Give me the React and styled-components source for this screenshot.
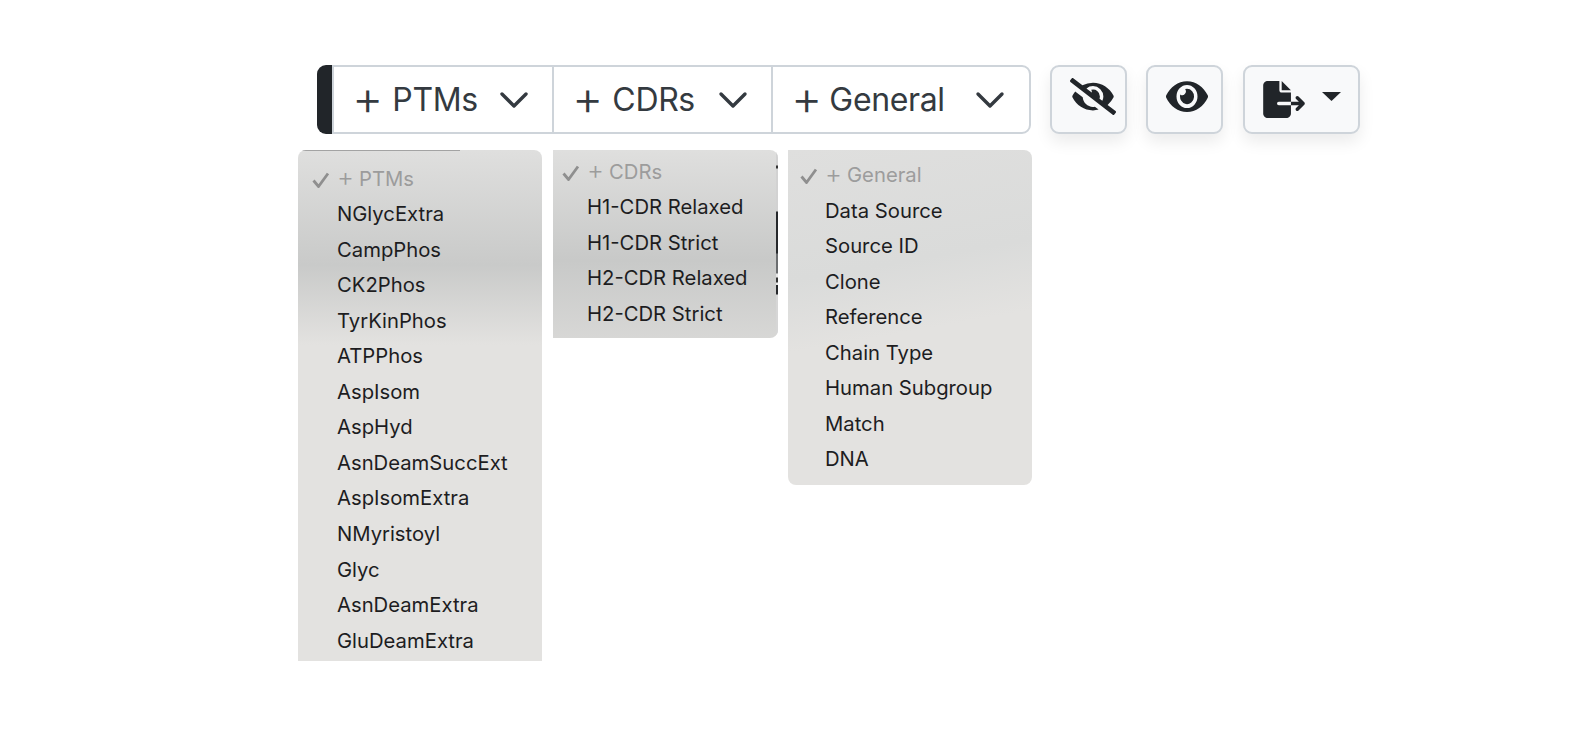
import React from "react";
import styled, { createGlobalStyle } from "styled-components";
import { FaEye, FaEyeSlash } from "react-icons/fa";

const Global = createGlobalStyle`
  html, body { margin: 0; padding: 0; background: #fff; height: 100%; overflow: hidden; }
  body { font-family: Inter, "Liberation Sans", sans-serif; }
`;
const Page = styled.div`
  width: 1580px; height: 748px; padding: 65px 0 0 298px; box-sizing: border-box;
  display: flex; flex-direction: column; gap: 16px;
`;
const Toolbar = styled.div`display: flex; align-items: stretch; height: 69px; margin-left: 19px;`;
const Grip = styled.div`width: 15px; flex: none; background: #212529; border-radius: 9px 0 0 9px;`;
const Group = styled.div`
  display: flex; width: 699px; box-sizing: border-box; border-radius: 0 9px 9px 0;
  border: 2px solid #ced4da; background: #fff; overflow: hidden;
`;
const SelectBtn = styled.div`
  width: ${p => p.$w}px; box-sizing: border-box; display: flex; align-items: center;
  justify-content: space-between; padding: 0 ${p => p.$pr}px 0 18px; color: #343a40;
  font-size: 32px; letter-spacing: -0.35px; white-space: nowrap;
  & + & { border-left: 2px solid #ced4da; }
`;
const Label = styled.span`display: flex; align-items: center; gap: ${p => p.$gap}px;`;
const Plus = styled.span`
  font-size: ${p => p.$size}px; font-weight: 300; line-height: 1; letter-spacing: 0; flex: none;
  position: relative; top: ${p => p.$top}px;
`;
const IconBtn = styled.div`
  width: ${p => p.$w}px; box-sizing: border-box; margin-left: ${p => p.$ml}px;
  padding: 0 0 ${p => p.$pb || 0}px ${p => p.$pl || 0}px;
  background: #f8f9fa; border: 2px solid #ced4da; border-radius: 9px;
  display: flex; align-items: center; justify-content: center; gap: 17px;
  box-shadow: 0 8px 16px rgba(0,0,0,.08); color: #212529;
`;
const SlashIcon = styled(FaEyeSlash)`width: 46px; height: 37px;`;
const EyeIcon = styled(FaEye)`width: 42px; height: 41px;`;
const Caret = styled.svg`margin-bottom: 6px;`;
const Menus = styled.div`display: flex; align-items: flex-start;`;
const Menu = styled.div`
  position: relative;
  width: ${p => p.$w}px; height: ${p => p.$h}px; margin-right: ${p => p.$mr || 0}px; box-sizing: border-box;
  padding-top: ${p => p.$pt}px; overflow: hidden; border-radius: ${p => p.$radius};
  background: linear-gradient(${p => p.$angle}deg, #dfdfde 0, ${p => p.$mc} ${p => p.$mid}px, #e3e2e0 ${p => p.$end}px, #e3e2e0 100%);
  font-size: 20.25px; color: #1d1d1f;
`;
const TopLine = styled.div`
  position: absolute; left: 4px; top: 0; width: 158px; height: 1px; background: #a3a3a3;
`;
const EdgeStrip = styled.div`
  position: absolute; right: 0; top: 0; bottom: 0; width: 2px;
  background: linear-gradient(180deg,
    #d2d2d2 0, #d2d2d2 15px, #333 16px, #333 18px, #d2d2d2 19px, #d2d2d2 61px,
    #26282b 62px, #26282b 103px, #6c6e70 104px, #6c6e70 123px, #e8e8e8 124px, #e8e8e8 127px,
    #333 128px, #333 132px, #e8e8e8 133px, #e8e8e8 135px, #26282b 135px, #26282b 144px,
    #d6d6d6 145px, #d6d6d6 100%);
`;
const Item = styled.div`
  height: 35.55px; line-height: 35.55px; padding-left: ${p => p.$pl}px; white-space: nowrap;
  position: relative;
  ${p => p.$head && "color: #9c9c9c; display: flex; align-items: center; gap: 5px;"}
`;
const Check = styled.svg`position: absolute; left: ${p => p.$left}px; top: 11px;`;

const Chevron = () => <svg width="32" height="18" viewBox="0 0 32 18"><path d="M4 3l12 12L28 3" fill="none" stroke="#343a40" strokeWidth="3.4" strokeLinecap="round" strokeLinejoin="round"/></svg>;

const ptms = ["NGlycExtra","CampPhos","CK2Phos","TyrKinPhos","ATPPhos","AspIsom","AspHyd","AsnDeamSuccExt","AspIsomExtra","NMyristoyl","Glyc","AsnDeamExtra","GluDeamExtra"];
const cdrs = ["H1-CDR Relaxed","H1-CDR Strict","H2-CDR Relaxed","H2-CDR Strict"];
const general = ["Data Source","Source ID","Clone","Reference","Chain Type","Human Subgroup","Match","DNA"];

const DropMenu = ({ title, items, pl, tick, children, ...rest }) => (
  <Menu {...rest}>
    {children}
    <Item $head $pl={pl}>
      <Check $left={tick} width="18" height="16" viewBox="0 0 18 16"><path d="M1.5 8.5l5 6L16 1.5" fill="none" stroke="#8f8f8f" strokeWidth="2.8" /></Check>
      <Plus $size={26} $top={-1}>+</Plus>
      {title}
    </Item>
    {items.map(i => <Item key={i} $pl={pl}>{i}</Item>)}
  </Menu>
);

const Select = ({ title, w, pr, gap }) => (
  <SelectBtn $w={w} $pr={pr}>
    <Label $gap={gap}><Plus $size={48} $top={-2}>+</Plus>{title}</Label>
    <Chevron />
  </SelectBtn>
);

export default function App() {
  return (
    <Page>
      <Global />
      <Toolbar>
        <Grip />
        <Group>
          <Select title="PTMs" w={218} pr={22} gap={9} />
          <Select title="CDRs" w={219} pr={22} gap={9} />
          <Select title="General" w={258} pr={23} gap={7} />
        </Group>
        <IconBtn $w={77} $ml={19} $pl={8} $pb={6}>
          <SlashIcon preserveAspectRatio="none" />
        </IconBtn>
        <IconBtn $w={77} $ml={19} $pl={4} $pb={6}>
          <EyeIcon preserveAspectRatio="none" />
        </IconBtn>
        <IconBtn $w={117} $ml={20}>
          <svg width="42" height="37" viewBox="0 0 576 512" fill="currentColor"><path d="M0 64C0 28.7 28.7 0 64 0H224V128c0 17.7 14.3 32 32 32H384V288H216c-13.3 0-24 10.7-24 24s10.7 24 24 24H384V448c0 35.3-28.7 64-64 64H64c-35.3 0-64-28.7-64-64V64zM384 336V288H494.1l-39-39c-9.4-9.4-9.4-24.6 0-33.9s24.6-9.4 33.9 0l80 80c9.4 9.4 9.4 24.6 0 33.9l-80 80c-9.4 9.4-24.6 9.4-33.9 0s-9.4-24.6 0-33.9l39-39H384zm0-208H256V0L384 128z"/></svg>
          <Caret width="19" height="9" viewBox="0 0 19 9"><path d="M0 0h19L9.5 9z" fill="#212529"/></Caret>
        </IconBtn>
      </Toolbar>
      <Menus>
        <DropMenu title="PTMs" items={ptms} pl={39} tick={14} $w={244} $h={511} $mr={11} $pt={10.5} $angle={180} $mc="#c9cac9" $mid={115} $end={195} $radius="8px 8px 0 0">
          <TopLine />
        </DropMenu>
        <DropMenu title="CDRs" items={cdrs} pl={34} tick={9} $w={225} $h={188} $mr={10} $pt={3.5} $angle={180} $mc="#c8c9c8" $mid={110} $end={250} $radius="0 8px 8px 0">
          <EdgeStrip />
        </DropMenu>
        <DropMenu title="General" items={general} pl={37} tick={12} $w={244} $h={335} $pt={7} $angle={170} $mc="#dadbda" $mid={130} $end={200} $radius="0 8px 8px 8px" />
      </Menus>
    </Page>
  );
}
